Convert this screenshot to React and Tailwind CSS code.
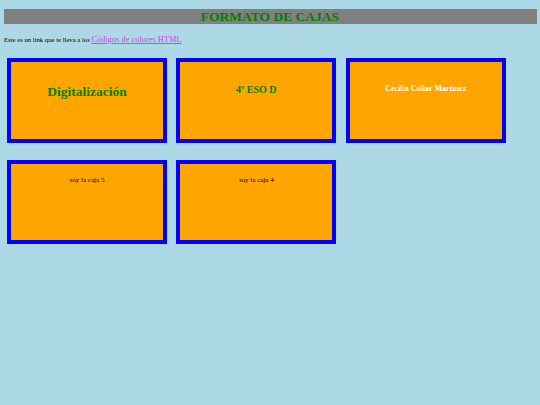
export default function App() {
  const serif = { fontFamily: '"Liberation Serif", "Times New Roman", serif' };

  return (
    <div className="w-full h-[405px] bg-[#add8e6] overflow-hidden" style={serif}>
      <div className="mx-[3.5px] pt-[9px]">
        <div className="h-[15px] bg-[#808080] flex items-center justify-center">
          <h1 className="text-[13.5px] font-bold leading-none text-[#008000]">FORMATO DE CAJAS</h1>
        </div>
      </div>

      <p className="mt-[9px] px-[4px] h-[14px] leading-[14px] text-[6.7px] text-black">
        Este es un link que te lleva a los{' '}
        <a href="#" className="text-[8.4px] text-[#cc44ee] underline">Códigos de colores HTML</a>
      </p>

      <div className="mt-[11px] ml-[7px] w-[510px] grid grid-cols-[160px_160px_160px] gap-x-[9.3px] gap-y-[17px]">
        <div className="h-[84.5px] bg-[#ffa500] border-4 border-[#0000ff] pt-[22px] text-center">
          <h2 className="text-[13.5px] font-bold leading-[16px] text-[#008000]">Digitalización</h2>
        </div>
        <div className="h-[84.5px] bg-[#ffa500] border-4 border-[#0000ff] pt-[22px] text-center">
          <h3 className="text-[10px] font-bold leading-[12px] text-[#008000]">4º ESO D</h3>
        </div>
        <div className="h-[84.5px] bg-[#ffa500] border-4 border-[#0000ff] pt-[22px] text-center">
          <h4 className="text-[8px] font-bold leading-[10px] text-white">Cecilia Collar Martinez</h4>
        </div>
        <div className="h-[84.5px] bg-[#ffa500] border-4 border-[#0000ff] pt-[12.5px] text-center">
          <p className="text-[7px] leading-[9px] text-black">soy la caja 5</p>
        </div>
        <div className="h-[84.5px] bg-[#ffa500] border-4 border-[#0000ff] pt-[12.5px] text-center">
          <p className="text-[7px] leading-[9px] text-black">soy la caja 4</p>
        </div>
      </div>
    </div>
  );
}
